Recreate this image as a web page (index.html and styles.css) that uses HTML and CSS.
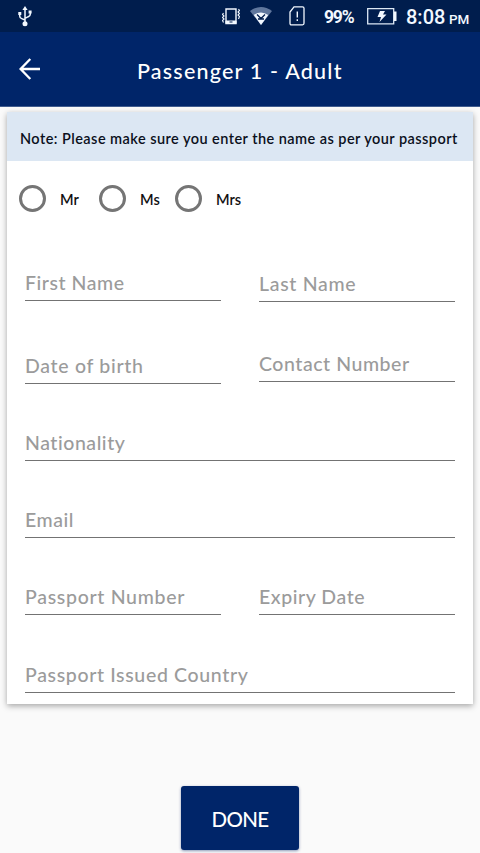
FILE: index.html
```html
<!DOCTYPE html>
<html lang="en">
<head>
<meta charset="utf-8">
<title>Passenger 1 - Adult</title>
<link rel="stylesheet" href="styles.css">
</head>
<body>
<div class="status">
  <svg class="usb" width="14" height="21" viewBox="0 0 14 21" fill="none" stroke="#f2f8ff" stroke-width="1.5"><path d="M7 4v13M1.700 7.500v2.500q0 2 2 2.600L7 14M12.300 6v2q0 2-2 2.700L7 12.300"/><path d="M7 0l2.600 4H4.400zM.3 6h3v3h-3zM10.600 4.500h3v3h-3z" fill="#f2f8ff" stroke="none"/><circle cx="7" cy="17.700" r="2.500" fill="#f2f8ff" stroke="none"/></svg>
  <svg class="vibrate" width="18" height="17" viewBox="0 0 18 17" fill="none" stroke="#f2f8ff"><path d="M4 1h10v14.500H4z" stroke-width="1.400"/><path d="M4 13h10v2.500H4z" fill="#f2f8ff"/><path d="M7.500 14h3" stroke="#001d4d"/><path d="M1.500 5l-1 1.500 1.500 1.500-1.500 1.500 1.500 1.500-1.500 1.500 1 2M16.500 1l1 1.500-1.500 1.500 1.500 1.500-1.500 1.500 1.500 1.500-1 2.500" stroke-width="1.100"/></svg>
  <svg class="wifi" width="22" height="18" viewBox="0 0 22 18"><path d="M0 4Q11-4 22 4L11 18z" fill="#60779d"/><path d="M3.800 8Q11 3 18.200 8L11 18z" fill="#f2f8ff"/><path d="M7 7.500l4 4 4-4M8 12h6" fill="none" stroke="#001d4d" stroke-width="1.300"/></svg>
  <svg class="sim" width="16" height="20" viewBox="0 0 16 20" fill="none" stroke="#f2f8ff" stroke-width="1.300"><path d="M5 .8h8.500q1.500 0 1.500 1.500v15q0 1.500-1.500 1.500h-11Q1 18.800 1 17.300V6z"/><path d="M8.300 5.500v6M8.300 13.300v1.700" stroke-width="1.400"/></svg>
  <span class="percent">99%</span>
  <svg class="battery" width="30" height="17" viewBox="0 0 30 17"><path d="M.7.700h26v15.100H.7z" fill="none" stroke="#dce8f5" stroke-width="1.300"/><path d="M27 3.500h2.500v9.500H27zM13 3h5l-2 3.500h3.500L12.500 14l1.500-5h-3.500z" fill="#f2f8ff"/></svg>
  <span class="clock">8:08</span><span class="pm">PM</span>
</div>
<header class="bar">
  <svg class="back" width="22" height="22" viewBox="0 0 22 22" fill="none" stroke="#fff" stroke-width="2.300"><path d="M21 11H2M11.300 1L1.600 11l9.700 10"/></svg>
  <h1>Passenger 1 - Adult</h1>
</header>
<main class="card">
  <p class="note">Note: Please make sure you enter the name as per your passport</p>
  <div class="titles">
    <span class="radio"></span><span class="mr">Mr</span>
    <span class="radio"></span><span class="ms">Ms</span>
    <span class="radio"></span><span class="mrs">Mrs</span>
  </div>
  <form class="fields">
    <div class="field first">First Name</div>
    <div class="field last">Last Name</div>
    <div class="field dob">Date of birth</div>
    <div class="field contact">Contact Number</div>
    <div class="field wide">Nationality</div>
    <div class="field wide">Email</div>
    <div class="field passport">Passport Number</div>
    <div class="field">Expiry Date</div>
    <div class="field wide country">Passport Issued Country</div>
  </form>
</main>
<button class="done">DONE</button>
</body>
</html>
```
FILE: styles.css
```css
* { box-sizing: border-box; }
body { margin: 0; height: 853px; overflow: hidden; background: #fafafa; font-family: Lato, sans-serif; display: flex; flex-direction: column; }
svg { display: block; flex: none; }
.status { height: 32px; flex: none; background: #001d4d; color: #f2f8ff; display: flex; align-items: center; font-family: Roboto, sans-serif; white-space: nowrap; }
.usb { margin-left: 18px; }
.vibrate { margin-left: 190px; }
.wifi { margin-left: 10px; }
.sim { margin-left: 17px; }
.percent { width: 31px; margin-left: 19px; padding-top: 1px; font-size: 17.5px; font-weight: 700; letter-spacing: -1.2px; }
.battery { margin-left: 12px; }
.clock { width: 39px; margin-left: 9px; padding-top: 1px; font-size: 20px; font-weight: 500; }
.pm { margin: 5px 0 0 4px; font-size: 13.5px; font-weight: 500; }
.bar { height: 75px; flex: none; background: #002569; display: flex; align-items: center; border-bottom: 1px solid #405c8e; }
.back { margin: 0 0 0 19px; }
.bar h1 { margin: 4px 0 0 96px; color: #fff; font-size: 21.5px; font-weight: 500; letter-spacing: 1.2px; white-space: nowrap; }
.card { width: 466px; height: 592px; flex: none; margin: 5px 7px 0; background: #fff; box-shadow: 0 2px 6px rgba(0,0,0,.34); }
.note { height: 49px; margin: 0; padding: 3px 0 0 13px; display: flex; align-items: center; background: #dce7f3; color: #0b101c; font-size: 14.5px; font-weight: 600; letter-spacing: .45px; white-space: nowrap; }
.titles { height: 75px; padding-left: 12px; display: flex; align-items: center; font-size: 14.5px; font-weight: 600; color: #111; }
.titles span:not(.radio) { padding-top: 2px; margin-left: 14px; }
.radio { width: 27px; height: 27px; border: 3px solid #757575; border-radius: 50%; }
.mr { width: 39px; }
.ms { width: 35px; }
.fields { padding: 29px 18px 0; display: grid; grid-template-columns: 196px 196px; column-gap: 38px; grid-template-rows: 37px 82px 77px 77px 77px 78px; align-items: end; }
.field { height: 36px; padding-top: 6px; border-bottom: 1px solid #737373; color: #9b9b9b; font-size: 19.5px; font-weight: 500; line-height: 24px; letter-spacing: .55px; white-space: nowrap; }
.wide { grid-column: 1 / 3; }
.first { margin-bottom: 1px; }
.last, .dob, .passport { letter-spacing: .7px; }
.country { letter-spacing: .65px; }
.contact { margin-bottom: 2px; }
.done { width: 118px; height: 64px; flex: none; margin: 82px 0 0 181px; padding: 2px 0 0; border: 0; border-radius: 3px; background: #002569; color: #fff; font: 500 20.5px Lato, sans-serif; letter-spacing: -.6px; box-shadow: 0 1px 3px rgba(0,30,100,.45); }
```
